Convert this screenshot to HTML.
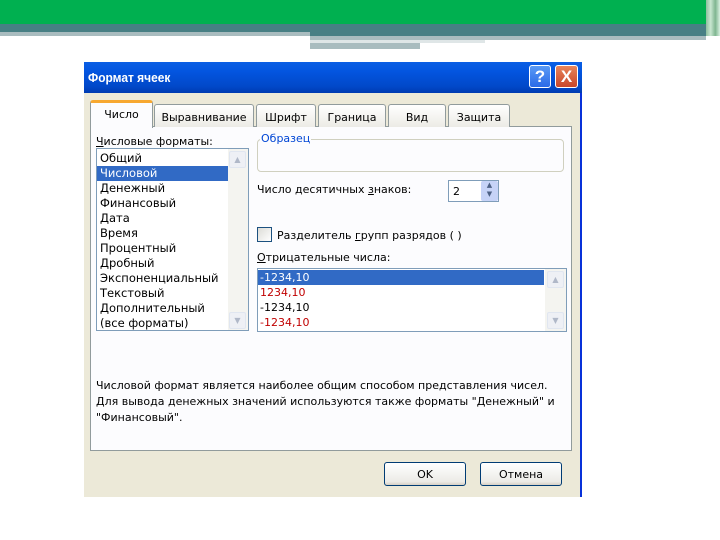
<!DOCTYPE html>
<html><head><meta charset="utf-8"><style>
*{margin:0;padding:0;box-sizing:border-box}
body{width:720px;height:540px;background:#fff;position:relative;overflow:hidden;font-family:"DejaVu Sans","Liberation Sans",sans-serif;font-size:11px;color:#000}
.a{position:absolute}
.t{position:absolute;white-space:nowrap;line-height:15px}
.li{position:absolute;left:3px;white-space:nowrap;line-height:15px}
.tab{position:absolute;top:104px;height:23px;border:1px solid #919b9c;border-bottom:none;border-radius:3px 3px 0 0;background:linear-gradient(#fff,#ecebe5);text-align:center;line-height:25px}
.sb{position:absolute;background:#f4f4f0}
.arr{position:absolute;width:17px;height:17px;border:1px solid #e0e6f0;border-radius:2px;background:#eef0f5;color:#b0b8c8;font-size:8px;text-align:center;line-height:15px}
.btn{position:absolute;top:462px;height:24px;border:1px solid #003c74;border-radius:3px;background:linear-gradient(#fff,#ecebe6 85%,#d6d0c5);text-align:center;line-height:24px}
</style></head><body>
<div class="a" style="left:0;top:0;width:706px;height:24px;background:#00b050"></div>
<div class="a" style="left:706px;top:0;width:14px;height:36px;background:linear-gradient(90deg,#8fbfa0,#c8e6d0,#7fb590,#d8f0e0)"></div>
<div class="a" style="left:0;top:24px;width:706px;height:8px;background:#477f84"></div>
<div class="a" style="left:0;top:32px;width:310px;height:4px;background:#a9bcbf"></div>
<div class="a" style="left:310px;top:32px;width:396px;height:4px;background:#477f84"></div>
<div class="a" style="left:310px;top:36px;width:396px;height:4px;background:#a9bcbf"></div>
<div class="a" style="left:310px;top:40px;width:175px;height:3px;background:#dfe6e7"></div>
<div class="a" style="left:310px;top:43px;width:110px;height:6px;background:#a9bcbf"></div>

<div class="a" style="left:84px;top:62px;width:498px;height:435px;background:#ece9d8;border-right:2px solid #0831d9"></div>
<div class="a" style="left:84px;top:62px;width:498px;height:31px;background:linear-gradient(#0a5fe4,#0355e0 30%,#0148c8 80%,#003bb0);"></div>
<div class="t" style="left:88px;top:70px;color:#fff;font-weight:bold;font-size:13px;font-family:'Liberation Sans',sans-serif;transform:scaleX(0.92);transform-origin:left">Формат ячеек</div>
<div class="a" style="left:529px;top:65px;width:22px;height:23px;border:1px solid #fff;border-radius:3px;background:linear-gradient(#5a9af5,#2a6ae8);color:#fff;font-size:17px;font-weight:bold;text-align:center;line-height:21px;font-family:'Liberation Sans',sans-serif">?</div>
<div class="a" style="left:555px;top:65px;width:23px;height:23px;border:1px solid #fff;border-radius:3px;background:linear-gradient(#e8845a,#c8452a);color:#fff;font-size:17px;font-weight:bold;text-align:center;line-height:21px;font-family:'Liberation Sans',sans-serif">X</div>

<div class="a" style="left:90px;top:126px;width:482px;height:325px;background:#fcfcfe;border:1px solid #919b9c"></div>
<div class="tab" style="left:154px;width:100px">Выравнивание</div>
<div class="tab" style="left:256px;width:60px">Шрифт</div>
<div class="tab" style="left:318px;width:68px">Граница</div>
<div class="tab" style="left:388px;width:58px">Вид</div>
<div class="tab" style="left:448px;width:62px">Защита</div>
<div class="tab" style="left:90px;top:100px;width:63px;height:28px;background:#fcfcfe;border-top:3px solid #f7a830;line-height:24px">Число</div>

<div class="t" style="left:96px;top:134px"><u>Ч</u>исловые форматы:</div>
<div class="a" style="left:96px;top:148px;width:153px;height:183px;background:#fff;border:1px solid #7f9db9"></div>
<div class="a" style="left:97px;top:149px;width:131px;height:181px;font-size:11.5px">
<div class="li" style="top:2px">Общий</div>
<div class="a" style="left:0;top:17px;width:131px;height:15px;background:#316ac5"></div>
<div class="li" style="top:17px;color:#fff">Числовой</div>
<div class="li" style="top:32px">Денежный</div>
<div class="li" style="top:47px">Финансовый</div>
<div class="li" style="top:62px">Дата</div>
<div class="li" style="top:77px">Время</div>
<div class="li" style="top:92px">Процентный</div>
<div class="li" style="top:107px">Дробный</div>
<div class="li" style="top:122px">Экспоненциальный</div>
<div class="li" style="top:137px">Текстовый</div>
<div class="li" style="top:152px">Дополнительный</div>
<div class="li" style="top:167px">(все форматы)</div>
</div>
<div class="sb" style="left:228px;top:149px;width:20px;height:181px"></div>
<div class="arr" style="left:229px;top:151px">▲</div>
<div class="arr" style="left:229px;top:312px">▼</div>

<div class="a" style="left:257px;top:139px;width:307px;height:33px;border:1px solid #d0d0bf;border-radius:4px"></div>
<div class="t" style="left:260px;top:131px;background:#fcfcfe;color:#0046d5;padding:0 1px">Образец</div>
<div class="t" style="left:257px;top:182px">Число десятичных <u>з</u>наков:</div>
<div class="a" style="left:448px;top:180px;width:51px;height:22px;background:#fff;border:1px solid #7f9db9"></div>
<div class="t" style="left:453px;top:184px">2</div>
<div class="a" style="left:481px;top:181px;width:17px;height:20px;background:#c6d3f7;border-radius:2px;color:#4d6185;font-size:7px;text-align:center;line-height:9px">▲<br>▼</div>
<div class="a" style="left:257px;top:227px;width:15px;height:15px;border:1px solid #1c5180;background:linear-gradient(135deg,#dcdcd7,#fff)"></div>
<div class="t" style="left:277px;top:228px">Разделитель <u>г</u>рупп разрядов ( )</div>
<div class="t" style="left:257px;top:250px"><u>О</u>трицательные числа:</div>
<div class="a" style="left:257px;top:268px;width:310px;height:64px;background:#fff;border:1px solid #7f9db9"></div>
<div class="a" style="left:258px;top:270px;width:286px;height:15px;background:#316ac5"></div>
<div class="t" style="left:260px;top:270px;color:#fff">-1234,10</div>
<div class="t" style="left:260px;top:285px;color:#c00000">1234,10</div>
<div class="t" style="left:260px;top:300px">-1234,10</div>
<div class="t" style="left:260px;top:315px;color:#c00000">-1234,10</div>
<div class="sb" style="left:545px;top:269px;width:21px;height:62px"></div>
<div class="arr" style="left:547px;top:271px">▲</div>
<div class="arr" style="left:547px;top:312px">▼</div>

<div class="t" style="left:96px;top:378px;line-height:16px;white-space:normal;width:470px">Числовой формат является наиболее общим способом представления чисел. Для вывода денежных значений используются также форматы "Денежный" и "Финансовый".</div>

<div class="btn" style="left:384px;width:82px">OK</div>
<div class="btn" style="left:480px;width:82px">Отмена</div>
</body></html>
